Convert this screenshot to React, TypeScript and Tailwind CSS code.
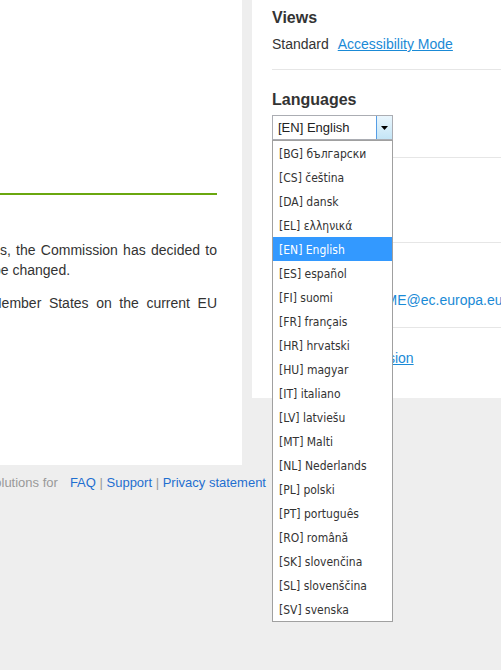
import React from 'react';

const languages = [
  ['BG', 'български'],
  ['CS', 'čeština'],
  ['DA', 'dansk'],
  ['EL', 'ελληνικά'],
  ['EN', 'English'],
  ['ES', 'español'],
  ['FI', 'suomi'],
  ['FR', 'français'],
  ['HR', 'hrvatski'],
  ['HU', 'magyar'],
  ['IT', 'italiano'],
  ['LV', 'latviešu'],
  ['MT', 'Malti'],
  ['NL', 'Nederlands'],
  ['PL', 'polski'],
  ['PT', 'português'],
  ['RO', 'română'],
  ['SK', 'slovenčina'],
  ['SL', 'slovenščina'],
  ['SV', 'svenska'],
];

function LanguageSelect() {
  return (
    <div className="relative mt-[5px] w-[121px]">
      {/* closed combobox */}
      <div className="flex h-[25px] border border-[#abadb3] bg-white">
        <span className="flex-1 pl-[5px] text-[13px] leading-[23px] text-[#222]">[EN] English</span>
        <span className="flex w-[16px] items-center justify-center border-l border-[#569de5] bg-gradient-to-b from-[#eaf6fd] to-[#c4e5f6]">
          <svg width="7" height="4" viewBox="0 0 7 4">
            <path d="M0 0h7L3.5 4z" fill="#000" />
          </svg>
        </span>
      </div>

      {/* open list */}
      <ul className="absolute left-0 top-full z-10 w-[121px] border border-[#a0a0a0] bg-white [font-family:'DejaVu_Sans_Condensed','DejaVu_Sans',sans-serif] text-[12px]">
        {languages.map(([code, name]) => (
          <li
            key={code}
            className={`h-[24px] pl-[6px] leading-[26px] whitespace-nowrap ${
              code === 'EN' ? 'bg-[#3399ff] text-white' : 'text-[#333]'
            }`}
          >
            [{code}] {name}
          </li>
        ))}
      </ul>
    </div>
  );
}

export default function App() {
  return (
    <div className="h-[670px] w-[501px] overflow-hidden bg-[#eeeeee] [font-family:'Liberation_Sans',Arial,sans-serif] text-[14px] text-[#333]">
      <div className="flex items-start">
        {/* Main column */}
        <div className="w-[242px] shrink-0">
          <div className="h-[465px] bg-white pt-[193px]">
            <div className="h-[2px] w-[217px] bg-[#6aa70f]" />
            <div className="mt-[45px] w-[217px] overflow-hidden leading-[20px]">
              <div className="flex justify-end whitespace-nowrap [word-spacing:1.4px]">
                <span>Member States, the Commission has decided to</span>
              </div>
              <div className="-ml-[7px] whitespace-nowrap">be changed.</div>
              <div className="mt-[13px] flex justify-end whitespace-nowrap [word-spacing:3.7px]">
                <span>consult the Member States on the current EU</span>
              </div>
            </div>
          </div>

          {/* Footer */}
          <div className="mt-[8px] flex w-[266px] justify-end whitespace-nowrap text-[13px] leading-[20px]">
            <span className="text-[#999]">Interoperability solutions for</span>
            <span className="ml-[12px] text-[#999]">
              <a className="text-[#1f6fd0]">FAQ</a> | <a className="text-[#1f6fd0]">Support</a> |{' '}
              <a className="text-[#1f6fd0]">Privacy statement</a>
            </span>
          </div>
        </div>

        {/* Sidebar */}
        <div className="ml-[10px] h-[398px] w-[249px] shrink-0 bg-white pl-[20px]">
          <div className="pt-[8px] pb-[15px]">
            <h2 className="text-[16px] font-bold leading-[20px]">Views</h2>
            <div className="mt-[6px] leading-[20px]">
              Standard <a className="ml-[5px] text-[#1a8ad6] underline">Accessibility Mode</a>
            </div>
          </div>

          <div className="border-t border-[#e6e6e6] pt-[20px] pb-[17px]">
            <h2 className="text-[16px] font-bold leading-[20px]">Languages</h2>
            <LanguageSelect />
          </div>

          <div className="h-[85px] border-t border-[#e6e6e6] pt-[19px]">
            <h2 className="text-[16px] font-bold leading-[20px]">Help</h2>
            <div className="mt-[6px] leading-[20px]">User guide</div>
          </div>

          <div className="h-[85px] border-t border-[#e6e6e6] pt-[19px]">
            <h2 className="text-[16px] font-bold leading-[20px]">Contact</h2>
            <div className="mt-[8px] whitespace-nowrap leading-[20px] text-[#1a8ad6]">REGIO-SFC2014-ME@ec.europa.eu</div>
          </div>

          <div className="border-t border-[#e6e6e6] pt-[20px]">
            <a className="leading-[20px] text-[#1a8ad6] underline">European Commission</a>
          </div>
        </div>
      </div>
    </div>
  );
}
